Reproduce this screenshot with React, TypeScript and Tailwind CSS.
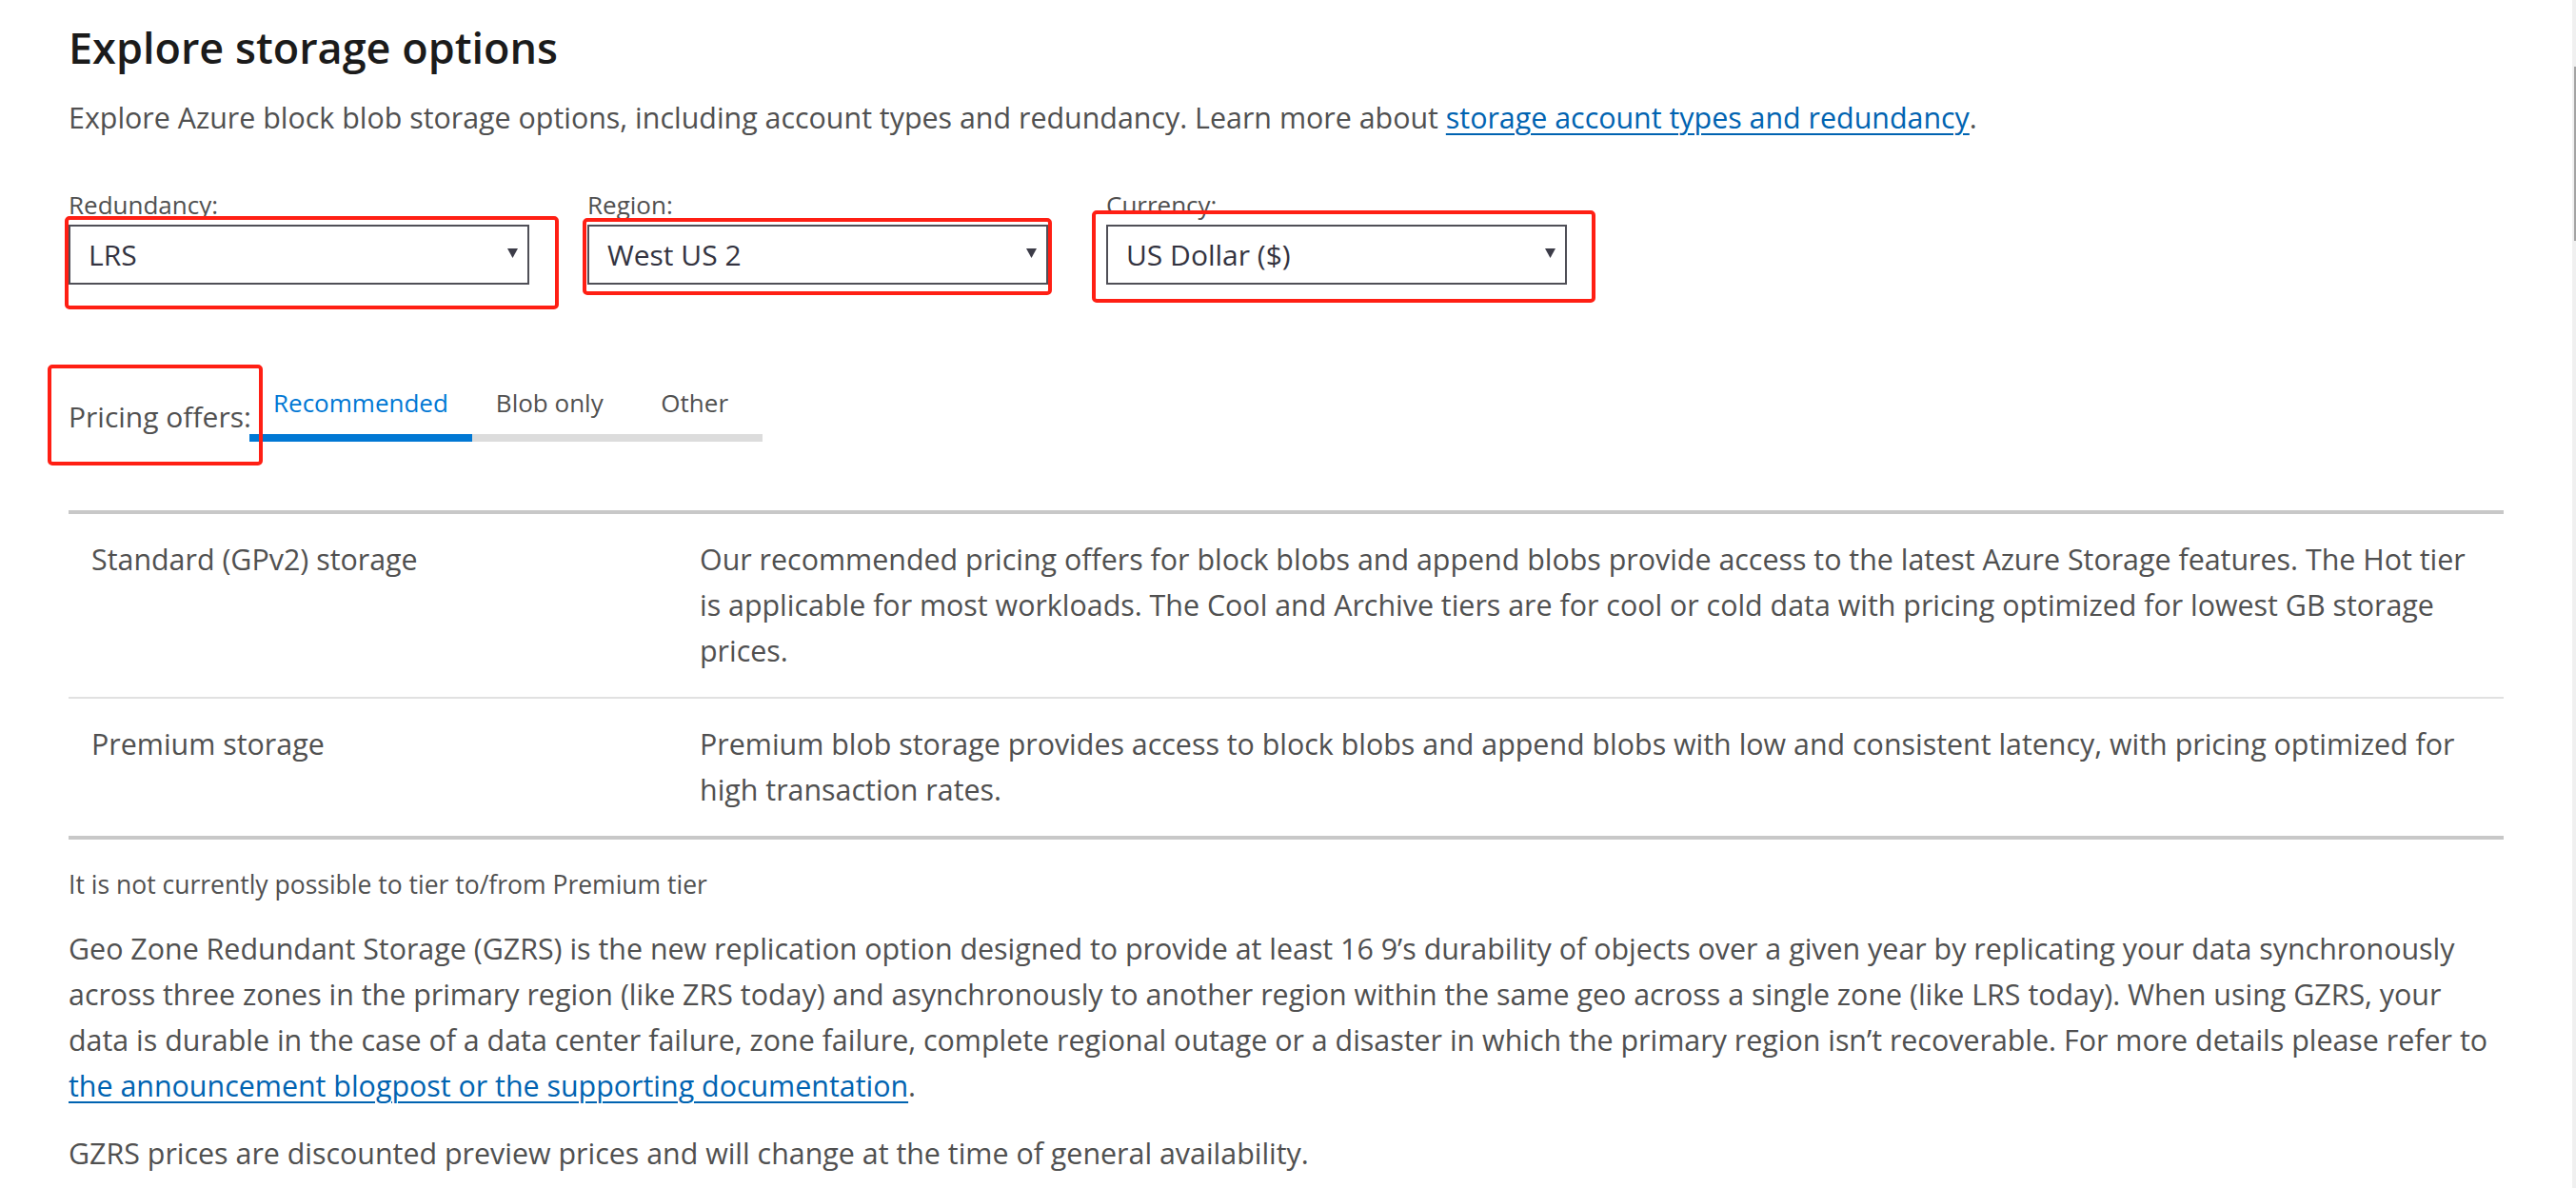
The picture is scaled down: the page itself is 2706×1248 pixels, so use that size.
const selects = [
  { label: "Redundancy:", value: "LRS", mark: "-left-[4px] -right-[31px] -top-[9px] -bottom-[26px]" },
  { label: "Region:", value: "West US 2", mark: "-left-[5px] -right-[4px] -top-[7px] -bottom-[11px]" },
  { label: "Currency:", value: "US Dollar ($)", mark: "-left-[15px] -right-[30px] -top-[15px] -bottom-[19px]" },
];

const tabs = [
  { name: "Recommended", active: true, cls: "px-[25px]" },
  { name: "Blob only", active: false, cls: "px-[25px]" },
  { name: "Other", active: false, cls: "w-[142px] justify-center" },
];

const offers = [
  {
    name: "Standard (GPv2) storage",
    text: "Our recommended pricing offers for block blobs and append blobs provide access to the latest Azure Storage features. The Hot tier is applicable for most workloads. The Cool and Archive tiers are for cool or cold data with pricing optimized for lowest GB storage prices.",
  },
  {
    name: "Premium storage",
    text: "Premium blob storage provides access to block blobs and append blobs with low and consistent latency, with pricing optimized for high transaction rates.",
  },
];

function Dropdown({ label, value, mark }: { label: string; value: string; mark: string }) {
  return (
    <div className="w-[484px] shrink-0">
      <div className="text-[26px] leading-[36px] text-[#505050]">{label}</div>
      <div className="relative mt-[3px]">
        <div className="flex h-[63px] items-center justify-between border-2 border-[#4f4f57] bg-white pl-[19px] pr-[10px]">
          <span className="text-[30px] leading-[36px] text-[#333340]">{value}</span>
          <svg width="11" height="11" viewBox="0 0 11 11" className="mb-[3px]">
            <path d="M0 0 L11 0 L5.5 10 Z" fill="#3c3c48" />
          </svg>
        </div>
        {/* annotation box drawn over the screenshot */}
        <span className={`pointer-events-none absolute rounded-[5px] border-4 border-[#ff1f14] ${mark}`} />
      </div>
    </div>
  );
}

export default function App() {
  return (
    <div className="flex min-h-screen bg-white font-['Open_Sans','Noto_Sans',sans-serif] text-[#505050]">
      <div className="flex-1 pl-[72px] pr-[72px] pt-[22px]">
        <h2 className="text-[45px] font-semibold leading-[55px] text-[#1b1b1b]">Explore storage options</h2>
        <p className="mt-[23px] text-[30.4px] leading-[48px]">
          Explore Azure block blob storage options, including account types and redundancy. Learn more about{" "}
          <a className="text-[#0063b1] underline decoration-2 underline-offset-[5px]">storage account types and redundancy</a>.
        </p>

        <div className="mt-[49px] flex gap-[61px]">
          {selects.map((s) => (
            <Dropdown key={s.label} {...s} />
          ))}
        </div>

        <div className="relative mt-[106px] flex items-start">
          <div className="mt-[13px] w-[190px] shrink-0 whitespace-nowrap text-[30px] leading-[40px] text-[#505050]">
            Pricing offers:
          </div>
          <div className="flex">
            {tabs.map((t) => (
              <div
                key={t.name}
                className={`flex border-b-8 pb-[15px] text-[26px] leading-[36px] ${t.cls} ${
                  t.active ? "border-[#0078d4] text-[#0078d4]" : "border-[#dcdcdc] text-[#505050]"
                }`}
              >
                {t.name}
              </div>
            ))}
          </div>
          <span className="pointer-events-none absolute -left-[22px] top-[-22px] h-[106px] w-[226px] rounded-[5px] border-4 border-[#ff1f14]" />
        </div>

        <div className="mt-[72px] border-y-4 border-[#c8c8c8]">
          {offers.map((o, i) => (
            <div
              key={o.name}
              className={`grid grid-cols-[639px_1fr] text-[30.4px] leading-[48px] ${i > 0 ? "border-t-2 border-[#e1e1e1]" : ""}`}
            >
              <div className="px-6 py-6">{o.name}</div>
              <div className="px-6 py-6">{o.text}</div>
            </div>
          ))}
        </div>

        <p className="mt-[29px] text-[26.5px] leading-[36px]">It is not currently possible to tier to/from Premium tier</p>
        <p className="mt-[26px] text-[30.4px] leading-[48px]">
          Geo Zone Redundant Storage (GZRS) is the new replication option designed to provide at least 16 9’s durability of
          objects over a given year by replicating your data synchronously across three zones in the primary region (like ZRS
          today) and asynchronously to another region within the same geo across a single zone (like LRS today). When using
          GZRS, your data is durable in the case of a data center failure, zone failure, complete regional outage or a
          disaster in which the primary region isn’t recoverable. For more details please refer to{" "}
          <a className="text-[#0063b1] underline decoration-2 underline-offset-[5px]">
            the announcement blogpost or the supporting documentation
          </a>
          .
        </p>
        <p className="mt-[23px] text-[30.4px] leading-[48px]">
          GZRS prices are discounted preview prices and will change at the time of general availability.
        </p>
      </div>
      <div className="w-[4px] shrink-0 bg-[#f0f0f0] pt-[70px]">
        <div className="ml-[2px] h-[183px] w-[2px] bg-[#a3a3a3]" />
      </div>
    </div>
  );
}
